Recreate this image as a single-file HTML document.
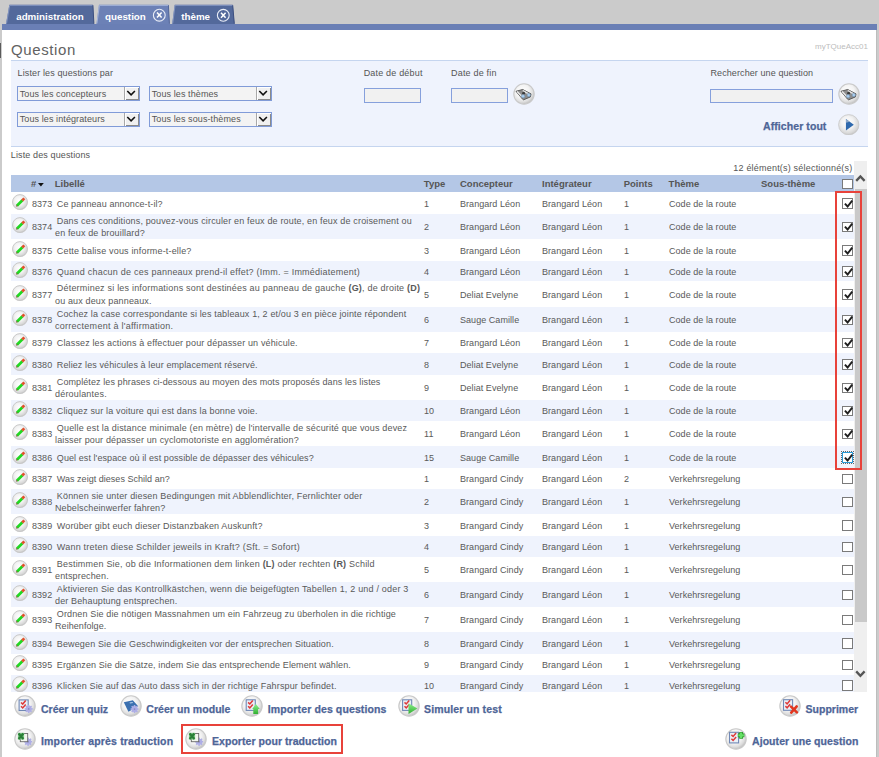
<!DOCTYPE html>
<html><head><meta charset="utf-8">
<style>
*{box-sizing:border-box}
html,body{margin:0;padding:0}
body{width:879px;height:757px;overflow:hidden;position:relative;background:#cbcbcb;font-family:"Liberation Sans",sans-serif;color:#555}
.a{position:absolute}
.t9{font-size:9px;line-height:12px;white-space:nowrap}
#panel{left:2px;top:30px;width:875px;height:727px;background:#fff}
#rb{left:876px;top:30px;width:1px;height:727px;background:#bdbdbd}
.tabt{font-weight:bold;font-size:9.8px;line-height:12px;color:#fff;white-space:nowrap}
#title{left:11px;top:40.7px;font-size:15px;line-height:18px;color:#626262;letter-spacing:0.6px}
#fp{left:11px;top:60px;width:857px;height:87px;background:#eff3fd;border-top:1px solid #c5d5ef;border-bottom:1px solid #c5d5ef}
.sel{height:15px;width:123px;border:1px solid #809bd8;background:#f3f3f3}
.sel .st{position:absolute;left:1.7px;top:0.7px;font-size:9px;line-height:12px;color:#555;white-space:nowrap;letter-spacing:0.1px}
.sel .ab{position:absolute;right:0px;top:0px;width:15px;height:13px;background:#f0f0f0;border-left:1px solid #a8a8a8;box-shadow:inset 1px 1px 0 #fff, inset -1px -1px 0 #8a8a8a}
.sel .ab svg{position:absolute;left:1.4px;top:1.8px}
.inp{height:14.4px;border:1px solid #86a0dc;background:#f1f1f1}
.circ{border-radius:50%;background:radial-gradient(circle at 45% 40%,#fff 0%,#f4f4f4 45%,#dcdcdc 80%,#c4c4c4 100%);box-shadow:0 0 0 0.6px #c8c8c8}
.link{font-weight:bold;font-size:10.5px;line-height:13px;color:#4e6597;white-space:nowrap;-webkit-text-stroke:0.25px #4e6597}
.row{position:absolute;left:11px;width:843px;background:#fff}
.row.alt{background:#eff3fd}
.row .ic{position:absolute;left:1px;top:50%;margin-top:-9.3px;width:16px;height:16px}
.row .c{position:absolute;top:1.3px;bottom:0;display:flex;align-items:center;font-size:9px;line-height:12.3px;color:#595959;white-space:nowrap;letter-spacing:0.05px}
.row .lib span{letter-spacing:0}
.row .num{left:21px}
.row .lib{left:44px;text-indent:1.8px}
.row .typ{left:413px}
.row .conc{left:449px}
.row .integ{left:531px}
.row .pts{left:613px}
.row .th{left:658px}
.cb{position:absolute;left:831px;top:50%;margin-top:-5px;width:10.5px;height:10.5px;border:1px solid #7a7a7a;background:#fff}
.cb svg{position:absolute;left:-0.5px;top:-0.5px}
.cb.focus{border-color:#2a9bd8;outline:1px dotted #666;outline-offset:0px}
.hd{font-weight:bold;font-size:9.5px;line-height:12px;color:#555;white-space:nowrap}
</style></head><body>
<svg width="0" height="0" style="position:absolute">
 <defs>
  <radialGradient id="cg" cx="0.45" cy="0.4" r="0.6">
   <stop offset="0" stop-color="#ffffff"/><stop offset="0.5" stop-color="#f2f2f2"/><stop offset="0.85" stop-color="#d9d9d9"/><stop offset="1" stop-color="#c6c6c6"/>
  </radialGradient>
  <symbol id="pen" viewBox="0 0 16 16">
   <circle cx="8" cy="8.1" r="7.5" fill="url(#cg)" stroke="#c6c6c6" stroke-width="0.9"/>
   <path d="M4.9 11.8 L10.4 6.3" stroke="#22d822" stroke-width="2.7"/>
   <path d="M10.2 6.5 L12.3 4.4" stroke="#e2502c" stroke-width="2.7"/>
   <path d="M4.3 12.4 L5.3 11.4" stroke="#8a5040" stroke-width="1.3"/>
  </symbol>
  <symbol id="gear" viewBox="0 0 10 10">
   <circle cx="5" cy="5" r="3.3" fill="#a9a9e6"/>
   <path d="M5 0.6 V9.4 M0.6 5 H9.4 M1.9 1.9 L8.1 8.1 M8.1 1.9 L1.9 8.1" stroke="#a9a9e6" stroke-width="1.6"/>
   <circle cx="5" cy="5" r="1.2" fill="#e6e6f5"/>
  </symbol>
  <symbol id="chk" viewBox="0 0 10 12">
   <rect x="0.5" y="0.5" width="8" height="10.5" fill="#fff" stroke="#6b80b0" stroke-width="1"/>
   <path d="M2 3.2 L3.3 4.6 L5.8 1.6 M2 6.8 L3.3 8.2 L5.8 5.2" fill="none" stroke="#e03030" stroke-width="1.1"/>
  </symbol>
  <symbol id="xls" viewBox="0 0 12 12">
   <rect x="3" y="2" width="7" height="9" fill="#fff" stroke="#777" stroke-width="0.8"/>
   <rect x="1" y="1" width="6" height="6" fill="#2e9a3e"/>
   <path d="M2.2 2.2 L5.8 5.8 M5.8 2.2 L2.2 5.8" stroke="#fff" stroke-width="1"/>
  </symbol>
 </defs>
</svg>

<!-- left edge dark segment -->
<div class="a" style="left:0;top:42.5px;width:1.3px;height:15.5px;background:#5a5a5a"></div>

<!-- tabs -->
<svg class="a" style="left:0;top:0" width="879" height="30">
 <polygon points="6,24 9.4,4.8 93,4.8 94,24" fill="#53699b"/>
 <path d="M92.9 5.2 L93.9 23.8" fill="none" stroke="#3c4f80" stroke-width="1"/>
 <path d="M6.5 23.5 L9.7 5.4 L92.4 5.4" fill="none" stroke="#8798c4" stroke-width="0.9"/>
 <polygon points="96.4,24 99,4.8 168.5,4.8 169.6,24" fill="#6c81b6"/>
 <path d="M168.4 5.2 L169.4 23.8" fill="none" stroke="#52669a" stroke-width="1"/>
 <path d="M96.9 23.5 L99.4 5.4 L168 5.4" fill="none" stroke="#a9b8dc" stroke-width="0.9"/>
 <polygon points="172.2,24 174.7,4.8 232.8,4.8 234.5,24" fill="#53699b"/>
 <path d="M232.7 5.2 L234.3 23.8" fill="none" stroke="#3c4f80" stroke-width="1"/>
 <path d="M172.7 23.5 L175 5.4 L232.3 5.4" fill="none" stroke="#8798c4" stroke-width="0.9"/>
 <circle cx="159.3" cy="15.2" r="5.9" fill="none" stroke="#e9edf7" stroke-width="1.1"/>
 <path d="M157 12.6 L161.6 17.6 M161.6 12.6 L157 17.6" stroke="#fff" stroke-width="1.5"/>
 <circle cx="223.3" cy="15.3" r="5.9" fill="none" stroke="#e9edf7" stroke-width="1.1"/>
 <path d="M221 12.7 L225.6 17.7 M225.6 12.7 L221 17.7" stroke="#fff" stroke-width="1.5"/>
 <rect x="2" y="24" width="875" height="6" fill="#6a7fb5"/>
</svg>
<div class="a tabt" style="left:16.2px;top:10.6px">administration</div>
<div class="a tabt" style="left:105px;top:10.6px">question</div>
<div class="a tabt" style="left:181.2px;top:10.6px">thème</div>

<div id="panel" class="a"></div>
<div id="rb" class="a"></div>

<div id="title" class="a">Question</div>
<div class="a" style="left:815px;top:41.5px;font-size:8px;line-height:10px;color:#bcbcbc;white-space:nowrap">myTQueAcc01</div>

<div id="fp" class="a"></div>
<div class="a t9" style="left:17.6px;top:67px;letter-spacing:0.12px">Lister les questions par</div>
<div class="a sel" style="left:17px;top:86px"><span class="st">Tous les concepteurs</span><div class="ab"><svg width="10" height="8" viewBox="0 0 10 8"><path d="M1.3 2 L5.1 5.8 L8.9 2" fill="none" stroke="#111" stroke-width="1.6"/></svg></div></div>
<div class="a sel" style="left:149px;top:86px"><span class="st">Tous les thèmes</span><div class="ab"><svg width="10" height="8" viewBox="0 0 10 8"><path d="M1.3 2 L5.1 5.8 L8.9 2" fill="none" stroke="#111" stroke-width="1.6"/></svg></div></div>
<div class="a sel" style="left:17px;top:111.8px"><span class="st">Tous les intégrateurs</span><div class="ab"><svg width="10" height="8" viewBox="0 0 10 8"><path d="M1.3 2 L5.1 5.8 L8.9 2" fill="none" stroke="#111" stroke-width="1.6"/></svg></div></div>
<div class="a sel" style="left:149px;top:111.8px"><span class="st">Tous les sous-thèmes</span><div class="ab"><svg width="10" height="8" viewBox="0 0 10 8"><path d="M1.3 2 L5.1 5.8 L8.9 2" fill="none" stroke="#111" stroke-width="1.6"/></svg></div></div>

<div class="a t9" style="left:363.7px;top:67px;letter-spacing:0.18px">Date de début</div>
<div class="a t9" style="left:451px;top:67px;letter-spacing:0.2px">Date de fin</div>
<div class="a inp" style="left:363.5px;top:88.4px;width:57.5px"></div>
<div class="a inp" style="left:450.5px;top:88.4px;width:57.5px"></div>
<svg class="a" style="left:512.6px;top:82.9px" width="22" height="22"><use href="#bino"/></svg>

<div class="a t9" style="left:710.5px;top:67px;letter-spacing:0.09px">Rechercher une question</div>
<div class="a inp" style="left:710px;top:88.6px;width:123px"></div>
<svg class="a" style="left:837.7px;top:83px" width="22" height="22"><use href="#bino"/></svg>
<div class="a link" style="left:763px;top:119.5px;letter-spacing:0.08px">Afficher tout</div>
<svg class="a" style="left:838px;top:113.5px" width="21.5" height="21.5" viewBox="0 0 22 22">
 <circle cx="11" cy="11" r="10.4" fill="url(#cg)" stroke="#c6c6c6" stroke-width="0.8"/>
 <path d="M8.1 5 L16.2 11 L8.1 17 Z" fill="#2f69ad"/>
 <path d="M8.1 5 L12 7.9 L8.1 9 Z" fill="#8fa9c8"/>
</svg>

<div class="a t9" style="left:10.8px;top:148.8px;letter-spacing:0.12px">Liste des questions</div>
<div class="a t9" style="left:733.3px;top:162.3px;letter-spacing:0.2px">12 élément(s) sélectionné(s)</div>

<!-- header -->
<div class="a" style="left:11px;top:174.5px;width:843px;height:17.5px;background:#b4c7e6"></div>
<div class="a hd" style="left:31px;top:178px">#<svg width="6" height="4" viewBox="0 0 6 4" style="vertical-align:0.5px;margin-left:1.6px"><path d="M0 0 H5.8 L2.9 3.6 Z" fill="#111"/></svg></div>
<div class="a hd" style="left:54.8px;top:178px">Libellé</div>
<div class="a hd" style="left:423.8px;top:178px">Type</div>
<div class="a hd" style="left:460px;top:178px">Concepteur</div>
<div class="a hd" style="left:542px;top:178px">Intégrateur</div>
<div class="a hd" style="left:623.7px;top:178px">Points</div>
<div class="a hd" style="left:668.6px;top:178px">Thème</div>
<div class="a hd" style="left:761px;top:178px">Sous-thème</div>
<div class="a" style="left:842px;top:178.5px;width:10.5px;height:10.5px;border:1px solid #7a7a7a;background:#fff"></div>

<div class="a" style="left:0;top:192px;width:879px;height:499.8px;overflow:hidden"><div class="row" style="top:0px;height:22px"><div class="ic"><svg class="pen" width="16" height="16" viewBox="0 0 16 16"><use href="#pen"/></svg></div><div class="c num">8373</div><div class="c lib"><div><span style="letter-spacing:0.096px">Ce panneau annonce-t-il?</span></div></div><div class="c typ">1</div><div class="c conc">Brangard Léon</div><div class="c integ">Brangard Léon</div><div class="c pts">1</div><div class="c th">Code de la route</div><div class="cb on"><svg width="10" height="10" viewBox="0 0 10 10"><path d="M1.9 4.6 L4.6 7.5 L9.2 1.6" fill="none" stroke="#1e1e1e" stroke-width="1.9"/></svg></div></div>
<div class="row alt" style="top:22px;height:25px"><div class="ic"><svg class="pen" width="16" height="16" viewBox="0 0 16 16"><use href="#pen"/></svg></div><div class="c num">8374</div><div class="c lib"><div><span style="letter-spacing:0.16px">Dans ces conditions, pouvez-vous circuler en feux de route, en feux de croisement ou</span><br><span style="letter-spacing:0.148px">en feux de brouillard?</span></div></div><div class="c typ">2</div><div class="c conc">Brangard Léon</div><div class="c integ">Brangard Léon</div><div class="c pts">1</div><div class="c th">Code de la route</div><div class="cb on"><svg width="10" height="10" viewBox="0 0 10 10"><path d="M1.9 4.6 L4.6 7.5 L9.2 1.6" fill="none" stroke="#1e1e1e" stroke-width="1.9"/></svg></div></div>
<div class="row" style="top:47px;height:22px"><div class="ic"><svg class="pen" width="16" height="16" viewBox="0 0 16 16"><use href="#pen"/></svg></div><div class="c num">8375</div><div class="c lib"><div><span style="letter-spacing:0.172px">Cette balise vous informe-t-elle?</span></div></div><div class="c typ">3</div><div class="c conc">Brangard Léon</div><div class="c integ">Brangard Léon</div><div class="c pts">1</div><div class="c th">Code de la route</div><div class="cb on"><svg width="10" height="10" viewBox="0 0 10 10"><path d="M1.9 4.6 L4.6 7.5 L9.2 1.6" fill="none" stroke="#1e1e1e" stroke-width="1.9"/></svg></div></div>
<div class="row alt" style="top:69px;height:20px"><div class="ic"><svg class="pen" width="16" height="16" viewBox="0 0 16 16"><use href="#pen"/></svg></div><div class="c num">8376</div><div class="c lib"><div><span style="letter-spacing:0.229px">Quand chacun de ces panneaux prend-il effet? (Imm. = Immédiatement)</span></div></div><div class="c typ">4</div><div class="c conc">Brangard Léon</div><div class="c integ">Brangard Léon</div><div class="c pts">1</div><div class="c th">Code de la route</div><div class="cb on"><svg width="10" height="10" viewBox="0 0 10 10"><path d="M1.9 4.6 L4.6 7.5 L9.2 1.6" fill="none" stroke="#1e1e1e" stroke-width="1.9"/></svg></div></div>
<div class="row" style="top:89px;height:26px"><div class="ic"><svg class="pen" width="16" height="16" viewBox="0 0 16 16"><use href="#pen"/></svg></div><div class="c num">8377</div><div class="c lib"><div><span style="letter-spacing:0.201px">Déterminez si les informations sont destinées au panneau de gauche <b>(G)</b>, de droite <b>(D)</b></span><br><span style="letter-spacing:0.145px">ou aux deux panneaux.</span></div></div><div class="c typ">5</div><div class="c conc">Deliat Evelyne</div><div class="c integ">Brangard Léon</div><div class="c pts">1</div><div class="c th">Code de la route</div><div class="cb on"><svg width="10" height="10" viewBox="0 0 10 10"><path d="M1.9 4.6 L4.6 7.5 L9.2 1.6" fill="none" stroke="#1e1e1e" stroke-width="1.9"/></svg></div></div>
<div class="row alt" style="top:115px;height:25px"><div class="ic"><svg class="pen" width="16" height="16" viewBox="0 0 16 16"><use href="#pen"/></svg></div><div class="c num">8378</div><div class="c lib"><div><span style="letter-spacing:0.147px">Cochez la case correspondante si les tableaux 1, 2 et/ou 3 en pièce jointe répondent</span><br><span style="letter-spacing:0.264px">correctement à l'affirmation.</span></div></div><div class="c typ">6</div><div class="c conc">Sauge Camille</div><div class="c integ">Brangard Léon</div><div class="c pts">1</div><div class="c th">Code de la route</div><div class="cb on"><svg width="10" height="10" viewBox="0 0 10 10"><path d="M1.9 4.6 L4.6 7.5 L9.2 1.6" fill="none" stroke="#1e1e1e" stroke-width="1.9"/></svg></div></div>
<div class="row" style="top:140px;height:21px"><div class="ic"><svg class="pen" width="16" height="16" viewBox="0 0 16 16"><use href="#pen"/></svg></div><div class="c num">8379</div><div class="c lib"><div><span style="letter-spacing:0.146px">Classez les actions à effectuer pour dépasser un véhicule.</span></div></div><div class="c typ">7</div><div class="c conc">Brangard Léon</div><div class="c integ">Brangard Léon</div><div class="c pts">1</div><div class="c th">Code de la route</div><div class="cb on"><svg width="10" height="10" viewBox="0 0 10 10"><path d="M1.9 4.6 L4.6 7.5 L9.2 1.6" fill="none" stroke="#1e1e1e" stroke-width="1.9"/></svg></div></div>
<div class="row alt" style="top:161px;height:22px"><div class="ic"><svg class="pen" width="16" height="16" viewBox="0 0 16 16"><use href="#pen"/></svg></div><div class="c num">8380</div><div class="c lib"><div><span style="letter-spacing:0.109px">Reliez les véhicules à leur emplacement réservé.</span></div></div><div class="c typ">8</div><div class="c conc">Deliat Evelyne</div><div class="c integ">Brangard Léon</div><div class="c pts">1</div><div class="c th">Code de la route</div><div class="cb on"><svg width="10" height="10" viewBox="0 0 10 10"><path d="M1.9 4.6 L4.6 7.5 L9.2 1.6" fill="none" stroke="#1e1e1e" stroke-width="1.9"/></svg></div></div>
<div class="row" style="top:183px;height:25px"><div class="ic"><svg class="pen" width="16" height="16" viewBox="0 0 16 16"><use href="#pen"/></svg></div><div class="c num">8381</div><div class="c lib"><div><span style="letter-spacing:0.093px">Complétez les phrases ci-dessous au moyen des mots proposés dans les listes</span><br><span style="letter-spacing:0.191px">déroulantes.</span></div></div><div class="c typ">9</div><div class="c conc">Deliat Evelyne</div><div class="c integ">Brangard Léon</div><div class="c pts">1</div><div class="c th">Code de la route</div><div class="cb on"><svg width="10" height="10" viewBox="0 0 10 10"><path d="M1.9 4.6 L4.6 7.5 L9.2 1.6" fill="none" stroke="#1e1e1e" stroke-width="1.9"/></svg></div></div>
<div class="row alt" style="top:208px;height:21px"><div class="ic"><svg class="pen" width="16" height="16" viewBox="0 0 16 16"><use href="#pen"/></svg></div><div class="c num">8382</div><div class="c lib"><div><span style="letter-spacing:0.145px">Cliquez sur la voiture qui est dans la bonne voie.</span></div></div><div class="c typ">10</div><div class="c conc">Brangard Léon</div><div class="c integ">Brangard Léon</div><div class="c pts">1</div><div class="c th">Code de la route</div><div class="cb on"><svg width="10" height="10" viewBox="0 0 10 10"><path d="M1.9 4.6 L4.6 7.5 L9.2 1.6" fill="none" stroke="#1e1e1e" stroke-width="1.9"/></svg></div></div>
<div class="row" style="top:229px;height:25px"><div class="ic"><svg class="pen" width="16" height="16" viewBox="0 0 16 16"><use href="#pen"/></svg></div><div class="c num">8383</div><div class="c lib"><div><span style="letter-spacing:0.177px">Quelle est la distance minimale (en mètre) de l'intervalle de sécurité que vous devez</span><br><span style="letter-spacing:0.143px">laisser pour dépasser un cyclomotoriste en agglomération?</span></div></div><div class="c typ">11</div><div class="c conc">Brangard Léon</div><div class="c integ">Brangard Léon</div><div class="c pts">1</div><div class="c th">Code de la route</div><div class="cb on"><svg width="10" height="10" viewBox="0 0 10 10"><path d="M1.9 4.6 L4.6 7.5 L9.2 1.6" fill="none" stroke="#1e1e1e" stroke-width="1.9"/></svg></div></div>
<div class="row alt" style="top:254px;height:22px"><div class="ic"><svg class="pen" width="16" height="16" viewBox="0 0 16 16"><use href="#pen"/></svg></div><div class="c num">8386</div><div class="c lib"><div><span style="letter-spacing:0.081px">Quel est l'espace où il est possible de dépasser des véhicules?</span></div></div><div class="c typ">15</div><div class="c conc">Sauge Camille</div><div class="c integ">Brangard Léon</div><div class="c pts">1</div><div class="c th">Code de la route</div><div class="cb on focus"><svg width="10" height="10" viewBox="0 0 10 10"><path d="M1.9 4.6 L4.6 7.5 L9.2 1.6" fill="none" stroke="#1e1e1e" stroke-width="1.9"/></svg></div></div>
<div class="row" style="top:276px;height:21px"><div class="ic"><svg class="pen" width="16" height="16" viewBox="0 0 16 16"><use href="#pen"/></svg></div><div class="c num">8387</div><div class="c lib"><div><span style="letter-spacing:0.027px">Was zeigt dieses Schild an?</span></div></div><div class="c typ">1</div><div class="c conc">Brangard Cindy</div><div class="c integ">Brangard Léon</div><div class="c pts">2</div><div class="c th">Verkehrsregelung</div><div class="cb"></div></div>
<div class="row alt" style="top:297px;height:25px"><div class="ic"><svg class="pen" width="16" height="16" viewBox="0 0 16 16"><use href="#pen"/></svg></div><div class="c num">8388</div><div class="c lib"><div><span style="letter-spacing:0.166px">Können sie unter diesen Bedingungen mit Abblendlichter, Fernlichter oder</span><br><span style="letter-spacing:0.108px">Nebelscheinwerfer fahren?</span></div></div><div class="c typ">2</div><div class="c conc">Brangard Cindy</div><div class="c integ">Brangard Léon</div><div class="c pts">1</div><div class="c th">Verkehrsregelung</div><div class="cb"></div></div>
<div class="row" style="top:322px;height:22px"><div class="ic"><svg class="pen" width="16" height="16" viewBox="0 0 16 16"><use href="#pen"/></svg></div><div class="c num">8389</div><div class="c lib"><div><span style="letter-spacing:0.135px">Worüber gibt euch dieser Distanzbaken Auskunft?</span></div></div><div class="c typ">3</div><div class="c conc">Brangard Cindy</div><div class="c integ">Brangard Léon</div><div class="c pts">1</div><div class="c th">Verkehrsregelung</div><div class="cb"></div></div>
<div class="row alt" style="top:344px;height:21px"><div class="ic"><svg class="pen" width="16" height="16" viewBox="0 0 16 16"><use href="#pen"/></svg></div><div class="c num">8390</div><div class="c lib"><div><span style="letter-spacing:0.227px">Wann treten diese Schilder jeweils in Kraft? (Sft. = Sofort)</span></div></div><div class="c typ">4</div><div class="c conc">Brangard Cindy</div><div class="c integ">Brangard Léon</div><div class="c pts">1</div><div class="c th">Verkehrsregelung</div><div class="cb"></div></div>
<div class="row" style="top:365px;height:25px"><div class="ic"><svg class="pen" width="16" height="16" viewBox="0 0 16 16"><use href="#pen"/></svg></div><div class="c num">8391</div><div class="c lib"><div><span style="letter-spacing:0.207px">Bestimmen Sie, ob die Informationen dem linken <b>(L)</b> oder rechten <b>(R)</b> Schild</span><br><span style="letter-spacing:0.145px">entsprechen.</span></div></div><div class="c typ">5</div><div class="c conc">Brangard Cindy</div><div class="c integ">Brangard Léon</div><div class="c pts">1</div><div class="c th">Verkehrsregelung</div><div class="cb"></div></div>
<div class="row alt" style="top:390px;height:25px"><div class="ic"><svg class="pen" width="16" height="16" viewBox="0 0 16 16"><use href="#pen"/></svg></div><div class="c num">8392</div><div class="c lib"><div><span style="letter-spacing:0.192px">Aktivieren Sie das Kontrollkästchen, wenn die beigefügten Tabellen 1, 2 und / oder 3</span><br><span style="letter-spacing:0.138px">der Behauptung entsprechen.</span></div></div><div class="c typ">6</div><div class="c conc">Brangard Cindy</div><div class="c integ">Brangard Léon</div><div class="c pts">1</div><div class="c th">Verkehrsregelung</div><div class="cb"></div></div>
<div class="row" style="top:415px;height:25px"><div class="ic"><svg class="pen" width="16" height="16" viewBox="0 0 16 16"><use href="#pen"/></svg></div><div class="c num">8393</div><div class="c lib"><div><span style="letter-spacing:0.134px">Ordnen Sie die nötigen Massnahmen um ein Fahrzeug zu überholen in die richtige</span><br><span style="letter-spacing:0.064px">Reihenfolge.</span></div></div><div class="c typ">7</div><div class="c conc">Brangard Cindy</div><div class="c integ">Brangard Léon</div><div class="c pts">1</div><div class="c th">Verkehrsregelung</div><div class="cb"></div></div>
<div class="row alt" style="top:440px;height:22px"><div class="ic"><svg class="pen" width="16" height="16" viewBox="0 0 16 16"><use href="#pen"/></svg></div><div class="c num">8394</div><div class="c lib"><div><span style="letter-spacing:0.138px">Bewegen Sie die Geschwindigkeiten vor der entsprechen Situation.</span></div></div><div class="c typ">8</div><div class="c conc">Brangard Cindy</div><div class="c integ">Brangard Léon</div><div class="c pts">1</div><div class="c th">Verkehrsregelung</div><div class="cb"></div></div>
<div class="row" style="top:462px;height:21px"><div class="ic"><svg class="pen" width="16" height="16" viewBox="0 0 16 16"><use href="#pen"/></svg></div><div class="c num">8395</div><div class="c lib"><div><span style="letter-spacing:0.103px">Ergänzen Sie die Sätze, indem Sie das entsprechende Element wählen.</span></div></div><div class="c typ">9</div><div class="c conc">Brangard Cindy</div><div class="c integ">Brangard Léon</div><div class="c pts">1</div><div class="c th">Verkehrsregelung</div><div class="cb"></div></div>
<div class="row alt" style="top:483px;height:20px"><div class="ic"><svg class="pen" width="16" height="16" viewBox="0 0 16 16"><use href="#pen"/></svg></div><div class="c num">8396</div><div class="c lib"><div><span style="letter-spacing:0.154px">Klicken Sie auf das Auto dass sich in der richtige Fahrspur befindet.</span></div></div><div class="c typ">10</div><div class="c conc">Brangard Cindy</div><div class="c integ">Brangard Léon</div><div class="c pts">1</div><div class="c th">Verkehrsregelung</div><div class="cb"></div></div></div>

<!-- scrollbar -->
<div class="a" style="left:854px;top:161px;width:13px;height:530.5px;background:#efefef"></div>
<div class="a" style="left:855px;top:189px;width:11.5px;height:432.7px;background:#c9c9c9"></div>
<svg class="a" style="left:855px;top:173px" width="11" height="10" viewBox="0 0 11 10"><path d="M1.2 7.9 L5.4 3.4 L9.6 7.9" fill="none" stroke="#555" stroke-width="2.3"/></svg>
<svg class="a" style="left:855px;top:668.5px" width="11" height="10" viewBox="0 0 11 10"><path d="M1.2 2.4 L5.4 6.9 L9.6 2.4" fill="none" stroke="#555" stroke-width="2.3"/></svg>

<!-- red boxes -->
<div class="a" style="left:835px;top:191px;width:26.6px;height:279px;border:2.4px solid #e8423a"></div>
<div class="a" style="left:181.3px;top:723.5px;width:161.7px;height:30.5px;border:2px solid #e8423a"></div>

<!-- actions -->
<svg class="a" style="left:14.15px;top:694.8px" width="22" height="22"><use href="#aquiz"/></svg>
<div class="a link" style="left:41px;top:702.5px">Créer un quiz</div>
<svg class="a" style="left:120px;top:694.8px" width="22" height="22"><use href="#amod"/></svg>
<div class="a link" style="left:146.3px;top:702.5px;letter-spacing:0.05px">Créer un module</div>
<svg class="a" style="left:240.9px;top:694.9px" width="22" height="22"><use href="#aimp"/></svg>
<div class="a link" style="left:267.8px;top:702.5px;letter-spacing:0.12px">Importer des questions</div>
<svg class="a" style="left:397.6px;top:694.9px" width="22" height="22"><use href="#asim"/></svg>
<div class="a link" style="left:424px;top:702.5px;letter-spacing:0.13px">Simuler un test</div>
<svg class="a" style="left:778.6px;top:694.9px" width="22" height="22"><use href="#adel"/></svg>
<div class="a link" style="left:805.6px;top:702.5px">Supprimer</div>

<svg class="a" style="left:14.2px;top:728px" width="22" height="22"><use href="#axls"/></svg>
<div class="a link" style="left:41px;top:735px;letter-spacing:0.18px">Importer après traduction</div>
<svg class="a" style="left:185px;top:727.8px" width="22" height="22"><use href="#axls"/></svg>
<div class="a link" style="left:212px;top:735px;letter-spacing:0.05px">Exporter pour traduction</div>
<svg class="a" style="left:724.6px;top:727.9px" width="22" height="22"><use href="#aadd"/></svg>
<div class="a link" style="left:752px;top:735px;letter-spacing:0.07px">Ajouter une question</div>

<svg width="0" height="0" style="position:absolute">
 <defs>
  <radialGradient id="cg2" cx="0.42" cy="0.38" r="0.62">
   <stop offset="0" stop-color="#ffffff"/><stop offset="0.55" stop-color="#f3f3f3"/><stop offset="0.82" stop-color="#dedede"/><stop offset="1" stop-color="#c2c2c2"/>
  </radialGradient>
  <linearGradient id="grn" x1="0" y1="0" x2="0" y2="1"><stop offset="0" stop-color="#8ef08e"/><stop offset="1" stop-color="#2faf2f"/></linearGradient>
  <symbol id="circ22" viewBox="0 0 22 22">
   <circle cx="11" cy="11" r="10.2" fill="url(#cg2)" stroke="#c9c9c9" stroke-width="1.1"/>
  </symbol>
  <symbol id="doc" viewBox="0 0 22 22">
   <rect x="5.4" y="5.3" width="9.1" height="10.6" fill="#e9f0f7" stroke="#7088b5" stroke-width="1.1"/>
   <path d="M7.3 7.9 L9 9.5 L12 5.9 M7.3 11.7 L9 13.4 L12 9.9" fill="none" stroke="#de3a3a" stroke-width="1.5"/>
  </symbol>
  <symbol id="gear2" viewBox="0 0 10 10">
   <g fill="#aeaee6">
    <circle cx="5" cy="5" r="3.4"/>
    <rect x="4.1" y="0.4" width="1.8" height="9.2"/>
    <rect x="0.4" y="4.1" width="9.2" height="1.8"/>
    <rect x="4.1" y="0.4" width="1.8" height="9.2" transform="rotate(45 5 5)"/>
    <rect x="4.1" y="0.4" width="1.8" height="9.2" transform="rotate(-45 5 5)"/>
   </g>
   <circle cx="5" cy="5" r="1" fill="#8a8ac0"/>
  </symbol>
  <symbol id="bino" viewBox="0 0 22 22">
   <use href="#circ22" width="22" height="22"/>
   <path d="M3 8.3 L9.7 6.5 L18 10.9 L17.4 13.9 L10.6 16.8 L9.7 16.3 Z" fill="#8c8c8c" stroke="#5a5a5a" stroke-width="1" stroke-linejoin="round"/>
   <path d="M4.6 8.9 L8.8 13.4 M10.4 7.8 L15.6 10.9" stroke="#e6e6e6" stroke-width="1.5" stroke-linecap="round"/>
   <circle cx="10.6" cy="10.2" r="1.4" fill="#3a3a3a"/>
   <circle cx="10.1" cy="13.2" r="1.7" fill="#a9cdee" stroke="#6d8aa8" stroke-width="0.5"/>
   <circle cx="15.8" cy="12" r="1.7" fill="#a9cdee" stroke="#6d8aa8" stroke-width="0.5"/>
  </symbol>
  <symbol id="aquiz" viewBox="0 0 22 22">
   <use href="#circ22" width="22" height="22"/>
   <use href="#doc" x="-0.3" y="-0.4" width="22" height="22"/>
   <use href="#gear2" x="10.3" y="9.5" width="8.8" height="8.8"/>
  </symbol>
  <symbol id="amod" viewBox="0 0 22 22">
   <use href="#circ22" width="22" height="22"/>
   <path d="M3.8 7.2 L12.85 5.2 L18.2 11.3 L8.4 16.8 Z" fill="#3b70b0"/>
   <path d="M9.5 7.5 L12.5 7 L13 8 L10 8.6 Z" fill="#b8d0ea"/>
   <use href="#gear2" x="10.15" y="9.65" width="8.8" height="8.8"/>
  </symbol>
  <symbol id="aimp" viewBox="0 0 22 22">
   <use href="#circ22" width="22" height="22"/>
   <use href="#doc" x="-0.2" y="-0.5" width="22" height="22"/>
   <path d="M14.9 9 L18.8 13.95 H17.1 V19.1 H12.3 V13.95 H11.2 Z" fill="url(#grn)"/>
  </symbol>
  <symbol id="asim" viewBox="0 0 22 22">
   <use href="#circ22" width="22" height="22"/>
   <use href="#doc" x="-0.8" y="-0.5" width="22" height="22"/>
   <path d="M10.5 8.2 L19.4 13.4 L10.5 19 Z" fill="url(#grn)"/>
  </symbol>
  <symbol id="adel" viewBox="0 0 22 22">
   <use href="#circ22" width="22" height="22"/>
   <use href="#doc" x="-0.9" y="-0.6" width="22" height="22"/>
   <path d="M12 11.6 L17.9 17.4 M17.7 11.4 L12.2 17.6" stroke="#e2361f" stroke-width="2.6" stroke-linecap="round"/>
  </symbol>
  <symbol id="aadd" viewBox="0 0 22 22">
   <use href="#circ22" width="22" height="22"/>
   <use href="#doc" x="-0.9" y="-1" width="22" height="22"/>
   <path d="M16.1 4.1 V10.7 M12.8 7.4 H19.4" stroke="#1f8f1f" stroke-width="3.6"/>
   <path d="M16.1 4.6 V10.2 M13.3 7.4 H18.9" stroke="#66e066" stroke-width="2.2"/>
  </symbol>
  <symbol id="axls" viewBox="0 0 22 22">
   <use href="#circ22" width="22" height="22"/>
   <use href="#gear2" x="9.6" y="9.2" width="9" height="9"/>
   <rect x="6.3" y="5.5" width="7.4" height="8.2" fill="#f2f6ee" stroke="#6a6a6a" stroke-width="0.9"/>
   <rect x="3.9" y="4.8" width="6.2" height="6.8" fill="#7cc486"/>
   <path d="M4.6 5.5 L9.4 10.9 M9.4 5.5 L4.6 10.9" stroke="#2a7f37" stroke-width="2.2"/>
  </symbol>
 </defs>
</svg>
</body></html>
